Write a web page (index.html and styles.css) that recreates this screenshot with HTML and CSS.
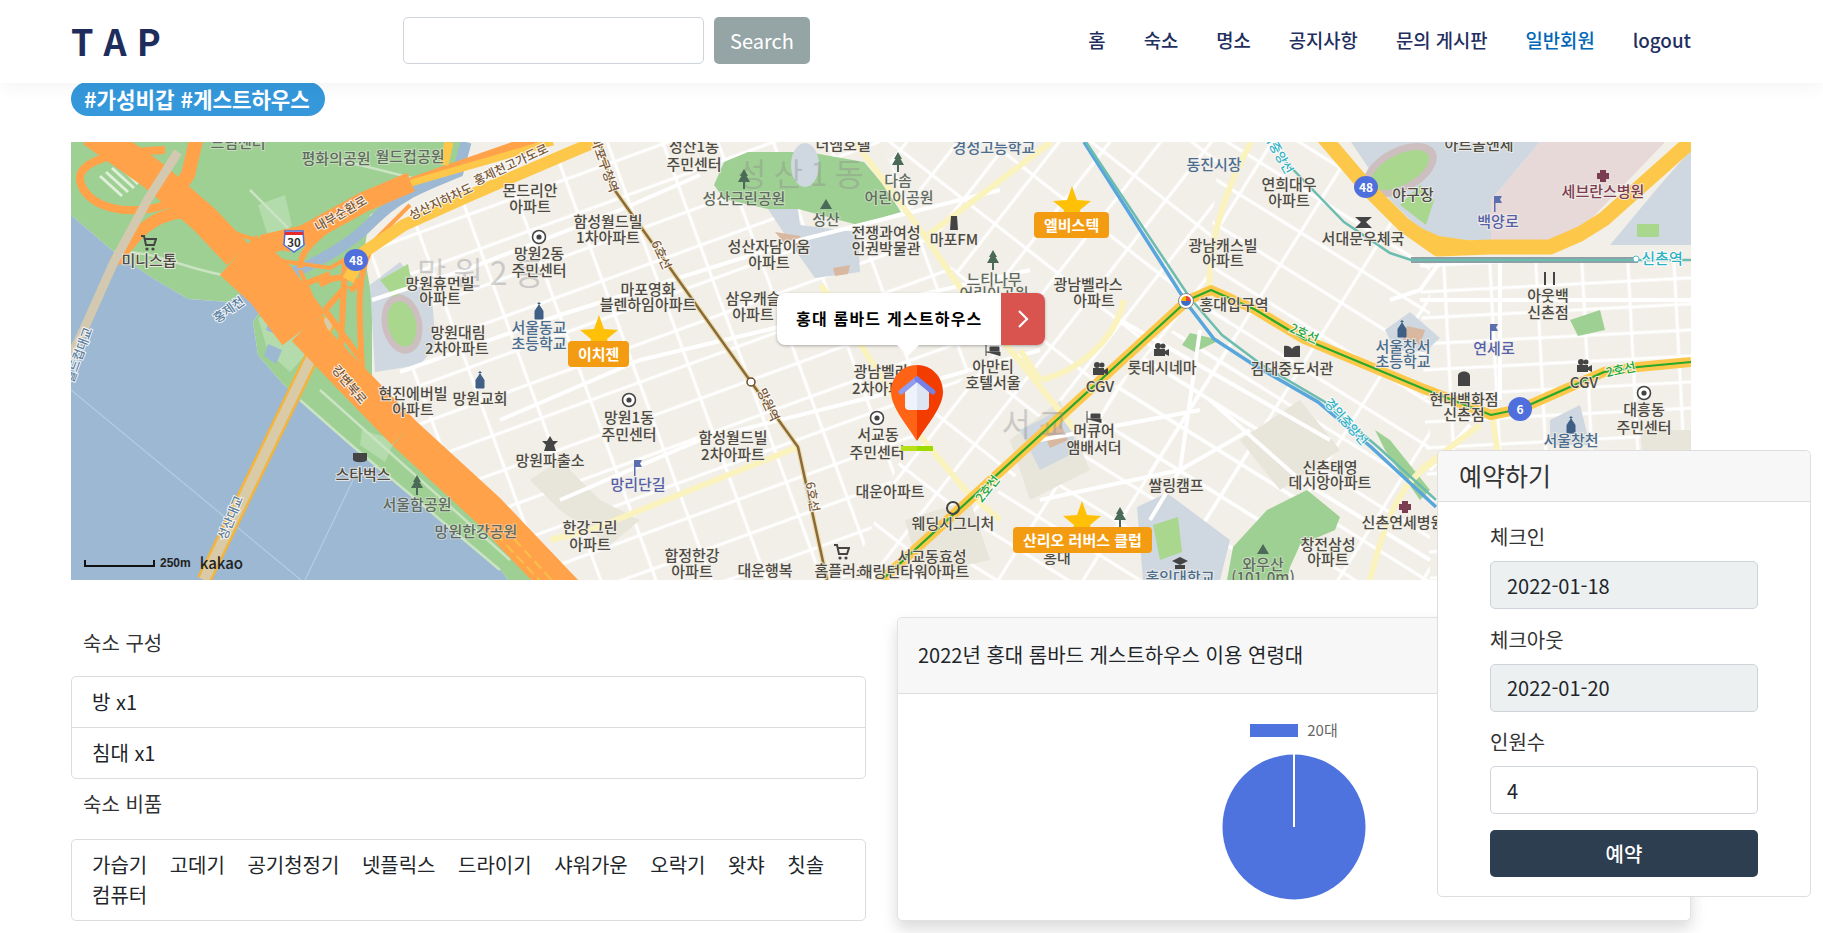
FILE: index.html
```html
<!DOCTYPE html>
<html lang="ko">
<head>
<meta charset="utf-8">
<title>TAP</title>
<link rel="stylesheet" href="styles.css">
</head>
<body>
<header class="topbar">
  <div class="logo">T A P</div>
  <form class="search">
    <input class="search-input" type="text">
    <button class="search-btn" type="button">Search</button>
  </form>
  <nav class="nav">
    <a>홈</a><a>숙소</a><a>명소</a><a>공지사항</a><a>문의 게시판</a><a class="nav-active">일반회원</a><a>logout</a>
  </nav>
</header>

<main class="page">
  <span class="tag">#가성비갑 #게스트하우스</span>

  <section class="map">
    <svg class="map-svg" viewBox="71 142 1620 438" width="1620" height="438" xmlns="http://www.w3.org/2000/svg">
      <defs>
        <pattern id="gw" width="52" height="36" patternUnits="userSpaceOnUse" patternTransform="rotate(-20)">
          <path d="M0 2H52M2 0V36" class="st"/>
        </pattern>
        <pattern id="gc" width="62" height="40" patternUnits="userSpaceOnUse" patternTransform="rotate(-52)">
          <path d="M0 2H62M2 0V40" class="st"/>
        </pattern>
        <pattern id="gd" width="72" height="38" patternUnits="userSpaceOnUse" patternTransform="rotate(32)">
          <path d="M0 2H72M2 0V38" class="st"/>
        </pattern>
        <pattern id="ge" width="46" height="26" patternUnits="userSpaceOnUse" patternTransform="rotate(-3)">
          <path d="M0 2H46M2 0V26" class="st"/>
        </pattern>
        <symbol id="target" viewBox="0 0 16 16" overflow="visible"><circle cx="8" cy="8" r="6.5" fill="#fff" stroke="#444" stroke-width="1.6"/><circle cx="8" cy="8" r="2.6" fill="#444"/></symbol>
        <symbol id="tree" viewBox="0 0 14 20"><path d="M7 0L11 7H9.5L13 13H8V20H6V13H1L4.5 7H3Z" fill="#4b6a58"/></symbol>
        <symbol id="church" viewBox="0 0 14 18"><path d="M7 0V3M5.5 1.5H8.500M7 3L11 9V17H3V9Z" fill="#3f5f85" stroke="#3f5f85"/></symbol>
        <symbol id="flag" viewBox="0 0 10 16"><path d="M1 0H9L7 3.500L9 7H2.500V16H1Z" fill="#5d6eb0"/></symbol>
        <symbol id="cam" viewBox="0 0 16 14"><circle cx="5" cy="3" r="3" fill="#444"/><circle cx="10" cy="3" r="2.500" fill="#444"/><path d="M1 6H12V13H1ZM12 8L16 6V13L12 11Z" fill="#444"/></symbol>
        <symbol id="cart" viewBox="0 0 16 16"><path d="M0 1H3L5 10H13L15 4H4" fill="none" stroke="#444" stroke-width="2"/><circle cx="6" cy="14" r="1.600" fill="#444"/><circle cx="12" cy="14" r="1.600" fill="#444"/></symbol>
        <symbol id="bed" viewBox="0 0 16 12"><path d="M1 0V12M1 8H15V12M5 3H14V7H5Z" fill="#444" stroke="#444"/></symbol>
      </defs>

      <rect x="71" y="142" width="1620" height="438" class="land"/>

      <path class="grid-w" d="M372 300L372 235L471 199L571 154L600 142H880L930 240L1000 330L900 460L850 580H560L400 440L378 400Z"/>
      <path class="grid-c" d="M880 142H1220L1205 300L1100 400L900 580H850L900 460L1000 330L930 240Z"/>
      <path class="grid-d" d="M1220 142H1330L1420 262H1430V580H1220L1100 400L1205 300Z"/>
      <path class="grid-e" d="M1420 262H1691V580H1430Z"/>
      <path class="grid-d" d="M1100 400L1220 300L1330 580H900Z"/>

      <path class="block" d="M1010 440L1060 400L1090 470L1030 500Z"/>
      <path class="block" d="M1240 440L1300 400L1340 450L1280 490Z"/>
      <path class="block" d="M1510 480L1600 450L1640 520L1540 550Z"/>
      <path class="block" d="M905 520L970 500L990 560L920 575Z"/>
      <path class="block" d="M560 460L600 500L640 520L610 545L560 510L530 480Z"/>
      <path class="block" d="M1640 430H1691V530H1650Z"/>

      <path class="park" d="M71 142H464L458 168L420 186L370 215L364 252L372 300L372 385L345 365L290 290L258 282L228 302L188 299L154 279L114 252L71 215Z"/>
      <path class="water" d="M71 215L114 252L154 279L188 299L228 302L258 282L268 299L253 322L258 355L284 385L301 400L348 443L501 570L508 580H71Z"/>
      <path class="channel" d="M262 284C300 272 345 250 372 222S425 186 458 172L466 142"/>
      <path class="park" d="M268 299L253 322L258 355L284 385L348 443L501 570L508 580H556L420 440L330 330L290 290Z"/>
      <path class="park-light" d="M258 318L285 306L310 350L290 372L268 352Z"/>
      <path class="park-light" d="M362 430L395 440L385 462L360 445Z"/>
      <path class="channel-s" d="M270 318L282 322L280 336L266 330ZM268 344L282 350L276 364L264 356Z"/>
      <path class="park-light" d="M258 205L285 195L292 226L268 236Z"/>
      <path class="park-line" d="M114 252C160 250 180 270 240 278M300 400L349 443L500 570M320 390L510 560M250 190L300 240M340 160L420 180"/>
      <path class="hatch" d="M100 176L122 196M106 172L128 192M112 168L134 188M118 164L138 184"/>
      <path class="water-line" d="M71 390L301 580M353 480L305 580"/>

      <path class="campus" d="M370 285L400 262L432 300L436 345L420 365L375 372Z"/>
      <ellipse cx="402" cy="324" rx="20" ry="30" transform="rotate(-12 402 324)" class="track"/>
      <ellipse cx="402" cy="324" rx="14" ry="23" transform="rotate(-12 402 324)" class="field"/>
      <path class="field-2" d="M380 280L408 264L412 286L394 297Z"/>

      <path class="park" d="M714 185L724 162L748 152H808L864 162L881 182L901 212L858 225L798 209H768L724 199Z"/>
      <ellipse cx="805" cy="165" rx="14" ry="22" class="campus"/>
      <path class="campus" d="M768 209L798 209L800 225L858 232L860 272L815 278L795 250Z"/>
      <path class="brick" d="M775 232L800 236L805 247L785 244ZM833 268L850 265L848 274L835 276Z"/>

      <path class="campus" d="M1137 507L1167 493L1230 540L1220 580H1143Z"/>
      <path class="field" d="M1153 525L1178 517L1182 552L1160 560Z"/>
      <path class="park" d="M1227 580L1233 547L1267 510L1307 490L1340 517L1335 530L1300 545L1290 567L1287 580Z"/>
      <path class="park" d="M1375 430L1390 440L1430 490L1420 500L1385 450Z"/>

      <path class="campus" d="M1351 142H1540L1491 200V240H1430L1390 200Z"/>
      <path class="pink" d="M1491 240V200L1540 142H1665L1571 240Z"/>
      <path class="campus" d="M1660 185L1691 150V245H1610Z"/>
      <ellipse cx="1400" cy="170" rx="40" ry="22" transform="rotate(-28 1400 170)" class="track"/>
      <ellipse cx="1400" cy="170" rx="32" ry="15" transform="rotate(-28 1400 170)" class="field"/>
      <path class="field" d="M1400 205L1420 185L1434 200L1426 225Z"/>
      <rect x="1637" y="224" width="22" height="13" class="field"/>
      <path class="campus" d="M1385 330L1410 312L1440 338L1425 352L1395 350Z"/>
      <path class="brick" d="M1407 326L1425 330L1420 345L1403 340Z"/>
      <path class="campus" d="M1550 420L1580 405L1590 445H1550Z"/>
      <path class="campus" d="M1020 430L1060 410L1080 450L1040 470Z"/>
      <path class="brick" d="M1040 425L1060 422L1068 440L1050 448Z"/>
      <path class="park" d="M1190 333L1220 340L1195 352L1182 345Z"/>
      <path class="park" d="M1570 320L1600 310L1605 330L1578 336Z"/>

      <path class="st-main" d="M372 300L470 268L620 210L700 175M400 372L560 315L800 240L1000 190M500 420L640 360L830 315L1030 270M560 500L700 440L900 390L1040 350M1040 440L1200 410M1210 400L1300 480L1430 560M1120 320L1330 440M1040 500L1180 470L1250 430M1200 330L1180 470L1150 520M1420 300H1691M1430 470L1470 425M1500 262V400M1440 262L1420 290L1390 300"/>
      <path class="st-pale" d="M855 142L924 235L961 289L1075 430"/>
      <path class="st-pale" d="M928 235L1051 142"/>
      <path class="st-pale" d="M821 285L861 345L911 425L965 490L1000 520"/>
      <path class="st-pale" d="M1251 142C1225 190 1209 240 1209 290"/>
      <path class="st-pale" d="M1124 300C1115 340 1080 370 1041 380M1020 350L1040 380"/>
      <path class="st-pale" d="M550 540L591 530L798 447"/>
      <path class="st-pale" d="M1437 460C1400 480 1385 520 1370 580"/>
      <path class="st-pale" d="M1480 425L1420 470M1493 420L1500 470"/>

      <path class="bridge-edge" d="M330 319L204 580"/>
      <path class="bridge" d="M330 319L204 580"/>

      <path class="hw" stroke-width="34" d="M404 433L488 510L566 592"/>
      <path class="hw" stroke-width="34" d="M304 329L345 372L404 433"/>
      <path class="hw" stroke-width="30" d="M92 132L153 175L204 219L238 255"/>
      <path class="hw" stroke-width="54" d="M238 255L271 285L304 329"/>
      <path class="hw" stroke-width="14" d="M197 136L188 175L171 198"/>
      <path class="hw" stroke-width="8" d="M165 150C110 152 78 162 80 180C84 205 125 222 180 200"/>
      <path class="hw" stroke-width="12" d="M185 212C150 215 135 235 115 262"/>
      <path class="hw" stroke-width="20" d="M262 245L304 235L364 202L411 182"/>
      <path class="hw" stroke-width="9" d="M411 182L560 130"/>
      <path class="hw" stroke-width="4" d="M190 212L240 235L290 250M330 340L300 270M275 260L330 268L370 245L410 205"/>
      <path class="hw" stroke-width="6" d="M300 268C300 240 340 230 345 205M320 285C340 270 370 280 350 290M290 290L330 274M325 310L347 285M325 310L360 358M345 262L340 365M370 250C355 280 360 320 362 370"/>
      <path class="hw-dash" d="M504 528L570 600M496 534L558 600"/>

      <path class="yl" stroke-width="12" d="M348 280L364 252L404 225L471 195L571 152L600 140"/>
      <path class="yl" stroke-width="9" d="M449 142L444 165"/>
      <path class="yl" stroke-width="7" d="M411 183L553 142"/>
      <path class="yl" stroke-width="15" d="M1321 134L1368 189L1404 225L1438 249L1490 247H1550L1580 234L1604 219L1697 136"/>
      <path class="yl" stroke-width="8" d="M1404 225L1438 240L1480 246"/>
      <path class="bridge-thin" d="M178 152L148 199L114 262L84 329L68 362"/>

      <path class="rail-6o" d="M600 142L611 185L751 382L798 447L827 580"/>
      <path class="rail-6" d="M600 142L611 185L751 382L798 447L827 580"/>

      <path class="rail-blue" d="M1084 142L1188 305L1214 339L1254 365L1318 402L1371 447L1436 507"/>
      <path class="rail-teal" d="M1086 142L1190 298L1222 335L1262 365L1325 402L1378 447L1436 500"/>
      <path class="rail-grey" d="M1411 260H1638"/>
      <path class="rail-teal" d="M1281 157L1344 222L1390 253L1411 260H1691"/>

      <path class="l2" d="M860 600L1188 300L1211 290L1254 309L1304 339L1424 389L1491 415L1520 409L1604 372L1638 367L1691 362"/>
      <path class="l2g" d="M860 600L1188 300L1211 290L1254 309L1304 339L1424 389L1491 415L1520 409L1604 372L1638 367L1691 362"/>

      <!-- watermark district names -->
      <text x="484" y="285" class="w">망원2동</text>
      <text x="804" y="186" class="w">성산1동</text>
      <text x="1038" y="436" class="w">서교</text>

      <!-- icons -->
      <use href="#target" x="531" y="229" width="16" height="16"/>
      <use href="#target" x="621" y="392" width="16" height="16"/>
      <use href="#target" x="869" y="410" width="16" height="16"/>
      <use href="#target" x="1636" y="385" width="16" height="16"/>
      <use href="#tree" x="737" y="169" width="14" height="20"/>
      <use href="#tree" x="891" y="152" width="14" height="20"/>
      <use href="#tree" x="986" y="250" width="14" height="20"/>
      <use href="#tree" x="410" y="475" width="14" height="20"/>
      <use href="#tree" x="1113" y="507" width="14" height="20"/>
      <path d="M820 209L826 199L832 209ZM1257 554L1263 544L1269 554Z" class="icon-g"/>
      <use href="#church" x="532" y="302" width="14" height="18"/>
      <use href="#church" x="473" y="371" width="14" height="18"/>
      <use href="#church" x="1395" y="320" width="14" height="18"/>
      <use href="#church" x="1564" y="416" width="14" height="18"/>
      <use href="#flag" x="633" y="460" width="10" height="16"/>
      <use href="#flag" x="1493" y="196" width="10" height="16"/>
      <use href="#flag" x="1489" y="324" width="10" height="16"/>
      <use href="#cam" x="1092" y="362" width="16" height="14"/>
      <use href="#cam" x="1153" y="343" width="16" height="14"/>
      <use href="#cam" x="1576" y="359" width="16" height="14"/>
      <use href="#cart" x="141" y="235" width="16" height="16"/>
      <use href="#cart" x="834" y="544" width="16" height="16"/>
      <use href="#bed" x="1086" y="411" width="16" height="12"/>
      <use href="#bed" x="985" y="344" width="16" height="12"/>
      <path class="icon-d" d="M550 436L553 441H558L554 445L556 451H544L546 445L542 441H547ZM1355 217H1372L1366 222L1372 228H1355L1361 222ZM1284 346C1288 345 1291 347 1292 349C1293 347 1296 345 1300 346V357H1284ZM1458 386V376C1458 370 1470 370 1470 376V386ZM353 453H367V460C365 463 355 463 353 460ZM1544 272V285H1546V272ZM1553 272V285H1555V272Z"/>
      <path class="icon-m" d="M1600 170H1606V173H1609V179H1606V182H1600V179H1597V173H1600ZM1402 501H1408V504H1411V510H1408V513H1402V510H1399V504H1402Z"/>
      <circle cx="953" cy="508" r="6" class="icon-r"/>
      <path class="icon-d" d="M1172 561L1180 557L1188 561L1180 565ZM1175 565H1185V569H1175ZM951 216H957L958 230H950Z"/>

      <!-- labels -->
      <text x="238" y="148" class="l g">드림센터</text>
      <text x="336" y="164" class="l g">평화의공원</text>
      <text x="410" y="162" class="l g">월드컵공원</text>
      <text x="149" y="266" class="l">미니스톱</text>
      <text x="530" y="196" class="l">몬드리안</text>
      <text x="530" y="212" class="l">아파트</text>
      <text x="608" y="227" class="l">함성월드빌</text>
      <text x="608" y="243" class="l">1차아파트</text>
      <text x="539" y="259" class="l">망원2동</text>
      <text x="539" y="276" class="l">주민센터</text>
      <text x="440" y="289" class="l">망원휴먼빌</text>
      <text x="440" y="304" class="l">아파트</text>
      <text x="458" y="338" class="l">망원대림</text>
      <text x="457" y="354" class="l">2차아파트</text>
      <text x="539" y="333" class="l b">서울동교</text>
      <text x="539" y="349" class="l b">초등학교</text>
      <text x="413" y="399" class="l">현진에버빌</text>
      <text x="413" y="415" class="l">아파트</text>
      <text x="480" y="404" class="l">망원교회</text>
      <text x="694" y="152" class="l">성산1동</text>
      <text x="694" y="170" class="l">주민센터</text>
      <text x="744" y="204" class="l g">성산근린공원</text>
      <text x="826" y="225" class="l g">성산</text>
      <text x="898" y="186" class="l g">다솜</text>
      <text x="899" y="203" class="l g">어린이공원</text>
      <text x="843" y="150" class="l">더엠호텔</text>
      <text x="994" y="153" class="l b">경성고등학교</text>
      <text x="648" y="295" class="l">마포영화</text>
      <text x="648" y="310" class="l">블렌하임아파트</text>
      <text x="769" y="252" class="l">성산자담이움</text>
      <text x="769" y="268" class="l">아파트</text>
      <text x="886" y="238" class="l">전쟁과여성</text>
      <text x="886" y="254" class="l">인권박물관</text>
      <text x="954" y="245" class="l">마포FM</text>
      <text x="753" y="304" class="l">삼우캐슬</text>
      <text x="753" y="320" class="l">아파트</text>
      <text x="994" y="285" class="l g">느티나무</text>
      <text x="994" y="299" class="l g">어린이공원</text>
      <text x="1088" y="290" class="l">광남벨라스</text>
      <text x="1094" y="306" class="l">아파트</text>
      <text x="881" y="377" class="l">광남벨라</text>
      <text x="884" y="394" class="l">2차아파트</text>
      <text x="993" y="372" class="l">아만티</text>
      <text x="993" y="388" class="l">호텔서울</text>
      <text x="629" y="423" class="l">망원1동</text>
      <text x="629" y="440" class="l">주민센터</text>
      <text x="878" y="440" class="l">서교동</text>
      <text x="877" y="458" class="l">주민센터</text>
      <text x="733" y="443" class="l">함성월드빌</text>
      <text x="733" y="460" class="l">2차아파트</text>
      <text x="550" y="466" class="l">망원파출소</text>
      <text x="638" y="490" class="l b2">망리단길</text>
      <text x="363" y="480" class="l">스타벅스</text>
      <text x="417" y="510" class="l g">서울함공원</text>
      <text x="476" y="537" class="l g">망원한강공원</text>
      <text x="590" y="533" class="l">한강그린</text>
      <text x="590" y="550" class="l">아파트</text>
      <text x="692" y="561" class="l">합정한강</text>
      <text x="692" y="577" class="l">아파트</text>
      <text x="765" y="576" class="l">대운행복</text>
      <text x="842" y="576" class="l">홈플러스</text>
      <text x="890" y="497" class="l">대운아파트</text>
      <text x="953" y="529" class="l">웨딩시그니처</text>
      <text x="932" y="562" class="l">서교동효성</text>
      <text x="914" y="577" class="l">해링턴타워아파트</text>
      <text x="1094" y="436" class="l">머큐어</text>
      <text x="1094" y="453" class="l">앰배서더</text>
      <text x="1162" y="373" class="l">롯데시네마</text>
      <text x="1100" y="392" class="l">CGV</text>
      <text x="1292" y="374" class="l">김대중도서관</text>
      <text x="1403" y="352" class="l b">서울창서</text>
      <text x="1403" y="367" class="l b">초등학교</text>
      <text x="1494" y="354" class="l b2">연세로</text>
      <text x="1464" y="405" class="l">현대백화점</text>
      <text x="1464" y="420" class="l">신촌점</text>
      <text x="1584" y="388" class="l">CGV</text>
      <text x="1644" y="415" class="l">대흥동</text>
      <text x="1644" y="433" class="l">주민센터</text>
      <text x="1548" y="301" class="l">아웃백</text>
      <text x="1548" y="318" class="l">신촌점</text>
      <text x="1571" y="446" class="l b">서울창천</text>
      <text x="1176" y="491" class="l">쌀링캠프</text>
      <text x="1330" y="473" class="l">신촌태영</text>
      <text x="1330" y="488" class="l">데시앙아파트</text>
      <text x="1328" y="550" class="l">창전삼성</text>
      <text x="1328" y="565" class="l">아파트</text>
      <text x="1263" y="570" class="l g">와우산</text>
      <text x="1263" y="583" class="l g">(101.0m)</text>
      <text x="1403" y="528" class="l">신촌연세병원</text>
      <text x="1057" y="563" class="l">홍대</text>
      <text x="1180" y="583" class="l b">홍익대학교</text>
      <text x="1214" y="170" class="l b">동진시장</text>
      <text x="1289" y="190" class="l">연희대우</text>
      <text x="1289" y="206" class="l">아파트</text>
      <text x="1223" y="251" class="l">광남캐스빌</text>
      <text x="1223" y="266" class="l">아파트</text>
      <text x="1234" y="310" class="l">홍대입구역</text>
      <text x="1363" y="244" class="l">서대문우체국</text>
      <text x="1413" y="200" class="l">야구장</text>
      <text x="1498" y="227" class="l b2">백양로</text>
      <text x="1603" y="197" class="l mr">세브란스병원</text>
      <text x="1479" y="150" class="l">아트올앤세</text>
      <text x="1662" y="264" class="l t">신촌역</text>

      <text x="1304" y="338" transform="rotate(25 1304 334)" class="s gr">2호선</text>
      <text x="1621" y="374" transform="rotate(-12 1621 370)" class="s gr">2호선</text>
      <text x="988" y="493" transform="rotate(-52 988 489)" class="s gr">2호선</text>
      <text x="1346" y="426" transform="rotate(48 1346 422)" class="s t">경의중앙선</text>
      <text x="1275" y="152" transform="rotate(60 1275 148)" class="s t">경의중앙선</text>
      <text x="661" y="259" transform="rotate(65 661 255)" class="s br">6호선</text>
      <text x="812" y="501" transform="rotate(80 812 497)" class="s br">6호선</text>
      <text x="604" y="169" transform="rotate(70 604 165)" class="s br">마포구청역</text>
      <text x="768" y="409" transform="rotate(65 768 405)" class="s br">망원역</text>
      <text x="341" y="218" transform="rotate(-30 341 214)" class="s br">내부순환로</text>
      <text x="349" y="389" transform="rotate(50 349 385)" class="s br">강변북로</text>
      <text x="441" y="206" transform="rotate(-25 441 202)" class="s br">성산지하차도</text>
      <text x="511" y="169" transform="rotate(-25 511 165)" class="s br">홍제천고가도로</text>
      <text x="229" y="314" transform="rotate(-35 229 310)" class="s bl">홍제천</text>
      <text x="231" y="522" transform="rotate(-68 231 518)" class="s bl">성산대교</text>
      <text x="79" y="359" transform="rotate(-70 79 355)" class="s bl">월드컵대교</text>

      <!-- stations / badges -->
      <circle cx="751" cy="382" r="4" class="stn-6"/>
      <circle cx="1186" cy="301" r="7.500" class="stn"/>
      <path d="M1186 296A5 5 0 0 1 1191 301H1186Z" class="c-r"/>
      <path d="M1186 301H1191A5 5 0 0 1 1181 301Z" class="c-b"/>
      <path d="M1186 296A5 5 0 0 0 1181 301H1186Z" class="c-y"/>
      <circle cx="1636" cy="259" r="3" class="stn-t"/>

      <ellipse cx="356" cy="260" rx="12" ry="11" class="badge"/>
      <text x="356" y="265" class="badge-t">48</text>
      <ellipse cx="1366" cy="187" rx="12" ry="11" class="badge"/>
      <text x="1366" y="192" class="badge-t">48</text>
      <ellipse cx="1520" cy="409" rx="12" ry="12" class="badge"/>
      <text x="1520" y="414" class="badge-t">6</text>
      <path d="M285 231H303L304 245L294 252L284 245Z" class="shield"/>
      <rect x="285" y="232" width="18" height="3" class="shield-r"/>
      <text x="294" y="247" class="shield-t">30</text>
    </svg>

    <div class="marker marker-a">
      <svg class="star" viewBox="0 0 38 38"><polygon points="19,0 24,14 38,15 27,24 31,38 19,30 7,38 11,24 0,15 14,14"/></svg>
      <span class="marker-label">이치젠</span>
    </div>
    <div class="marker marker-b">
      <svg class="star" viewBox="0 0 38 38"><polygon points="19,0 24,14 38,15 27,24 31,38 19,30 7,38 11,24 0,15 14,14"/></svg>
      <span class="marker-label">엘비스텍</span>
    </div>
    <div class="marker marker-c">
      <svg class="star" viewBox="0 0 38 38"><polygon points="19,0 24,14 38,15 27,24 31,38 19,30 7,38 11,24 0,15 14,14"/></svg>
      <span class="marker-label">산리오 러버스 클럽</span>
    </div>

    <div class="callout">
      <span class="callout-text">홍대 롬바드 게스트하우스</span>
      <span class="callout-go">
        <svg viewBox="0 0 12 20" width="12" height="20"><path d="M2 2L10 10L2 18" fill="none" stroke="#fff" stroke-width="2.200"/></svg>
      </span>
    </div>

    <svg class="pin" viewBox="0 0 52 88">
      <path d="M26 0C11 0 0 12 0 27C0 42 16 60 26 76Z" fill="#ff6316"/>
      <path d="M26 0C41 0 52 12 52 27C52 42 36 60 26 76Z" fill="#f23c00"/>
      <path d="M14 27V41Q14 45 18 45H26V16Z" fill="#eef3fb"/>
      <path d="M38 27V41Q38 45 34 45H26V16Z" fill="#dde4f2"/>
      <path d="M26 14L10 27" stroke="#8f9cf0" stroke-width="5" stroke-linecap="round"/>
      <path d="M26 14L42 27" stroke="#7481e6" stroke-width="5" stroke-linecap="round"/>
      <rect x="10" y="81" width="16" height="5" fill="#b8e01a"/>
      <rect x="26" y="81" width="16" height="5" fill="#9ddb00"/>
    </svg>

    <div class="scale">
      <span class="scale-bar"></span>
      <span class="scale-num">250m</span>
      <span class="scale-logo">kakao</span>
    </div>
  </section>

  <section class="details">
    <div class="info">
      <h2 class="info-title first">숙소 구성</h2>
      <ul class="list">
        <li class="list-row">방 x1</li>
        <li class="list-row">침대 x1</li>
      </ul>
      <h2 class="info-title second">숙소 비품</h2>
      <ul class="list">
        <li class="list-row amenities">
          <span>가습기</span><span>고데기</span><span>공기청정기</span><span>넷플릭스</span><span>드라이기</span><span>샤워가운</span><span>오락기</span><span>왓챠</span><span>칫솔</span><span>컴퓨터</span>
        </li>
      </ul>
    </div>

    <div class="chart-card">
      <div class="chart-head">2022년 홍대 롬바드 게스트하우스 이용 연령대</div>
      <div class="chart-body">
        <div class="legend"><span class="legend-swatch"></span><span>20대</span></div>
        <svg class="pie" viewBox="0 0 144 146" width="144" height="146">
          <ellipse cx="72" cy="73" rx="71.500" ry="72.500" fill="#4e73df"/>
          <line x1="72" y1="0" x2="72" y2="73" stroke="#fff" stroke-width="2"/>
        </svg>
      </div>
    </div>
  </section>
</main>

<aside class="booking">
  <div class="booking-head">예약하기</div>
  <form class="booking-body">
    <label class="field-label">체크인</label>
    <input class="field-input is-locked" type="text" value="2022-01-18" readonly>
    <label class="field-label">체크아웃</label>
    <input class="field-input is-locked" type="text" value="2022-01-20" readonly>
    <label class="field-label">인원수</label>
    <input class="field-input" type="text" value="4">
    <button class="book-btn" type="button">예약</button>
  </form>
</aside>
</body>
</html>
```

FILE: styles.css
```css
* { box-sizing: border-box; }
html, body { margin: 0; padding: 0; height: 933px; overflow: hidden; }
body {
  position: relative;
  background: #fff;
  color: #212529;
  font-family: "Noto Sans CJK KR", "Noto Sans", sans-serif;
  font-size: 20px;
  line-height: 1.5;
}

/* header */
.topbar {
  position: relative;
  z-index: 5;
  display: flex;
  align-items: center;
  height: 83px;
  padding: 0 132px 0 71px;
  background: #fff;
  box-shadow: 0 6px 16px rgba(0, 0, 0, 0.04);
}
.logo {
  width: 332px;
  margin-bottom: 4px;
  color: #1f2d5c;
  font-size: 36px;
  font-weight: 700;
  letter-spacing: 0;
  line-height: 1;
}
.search { display: flex; gap: 10px; height: 47px; margin-bottom: 2px; }
.search-input {
  width: 301px;
  border: 1px solid #ced4da;
  border-radius: 5px;
  background: #fff;
}
.search-btn {
  width: 96px;
  border: 0;
  border-radius: 5px;
  background: #95a5a6;
  color: #fff;
  font: 400 20px "Noto Sans CJK KR", sans-serif;
}
.nav {
  display: flex;
  gap: 38px;
  margin-left: auto;
  margin-bottom: 2px;
  color: #1f2f5f;
  font-size: 18.8px;
  font-weight: 500;
}
.nav-active { color: #0067b8; }

/* page */
.page { padding: 0 132px 0 71px; }
.tag {
  display: block;
  width: 254px;
  height: 34px;
  margin-top: -1px;
  padding: 0 13px;
  border-radius: 17px;
  background: #3498db;
  color: #fff;
  font-size: 21.2px;
  font-weight: 700;
  line-height: 33px;
  white-space: nowrap;
}

/* map */
.map {
  position: relative;
  width: 1620px;
  height: 438px;
  margin-top: 26px;
  overflow: hidden;
}
.map-svg { display: block; font-family: "Noto Sans CJK KR", sans-serif; }
.st { fill: none; stroke: #fff; stroke-width: 3; }
.land { fill: #f2efe9; }
.grid-w { fill: url(#gw); }
.grid-c { fill: url(#gc); }
.grid-d { fill: url(#gd); }
.grid-e { fill: url(#ge); }
.block { fill: #e8e5da; }
.park { fill: #9fd093; }
.park-light { fill: #b4dbab; }
.park-line { fill: none; stroke: #c9e3c3; stroke-width: 2.500; }
.hatch { fill: none; stroke: #dff0da; stroke-width: 3; }
.water { fill: #9db8d2; }
.water-line { fill: none; stroke: #b5cde2; stroke-width: 1.200; }
.channel { fill: none; stroke: #9db8d2; stroke-width: 11; }
.channel-s { fill: #9db8d2; }
.campus { fill: #cfd8e0; }
.pink { fill: #e6d9d8; }
.track { fill: #cdbfc0; }
.field { fill: #a9d78e; }
.field-2 { fill: #a9d78e; }
.brick { fill: #d9b8a2; }
.st-main { fill: none; stroke: #fff; stroke-width: 4; }
.st-pale { fill: none; stroke: #fbf3bd; stroke-width: 6; }
.bridge-edge { fill: none; stroke: #f3b43e; stroke-width: 15; }
.bridge { fill: none; stroke: #d9cba8; stroke-width: 10; }
.bridge-thin { fill: none; stroke: #d3c9b0; stroke-width: 9; }
.hw { fill: none; stroke: #ffa24a; stroke-linejoin: round; }
.hw-dash { fill: none; stroke: #f6c04b; stroke-width: 2; stroke-dasharray: 10 5; }
.yl { fill: none; stroke: #fdc84a; stroke-linejoin: round; }
.rail-6o { fill: none; stroke: #ecdfae; stroke-width: 5; }
.rail-6 { fill: none; stroke: #8a6a3a; stroke-width: 2.500; }
.rail-blue { fill: none; stroke: #58a6dc; stroke-width: 3.500; }
.rail-teal { fill: none; stroke: #6dbcb0; stroke-width: 2.500; }
.rail-grey { fill: none; stroke: #8f9ea6; stroke-width: 6; }
.l2 { fill: none; stroke: #fdc84a; stroke-width: 10; stroke-linejoin: round; }
.l2g { fill: none; stroke: #2aa82a; stroke-width: 2.200; stroke-linejoin: round; }

.w { fill: rgba(140, 140, 140, 0.38); font-size: 32px; letter-spacing: 7px; text-anchor: middle; }
.l {
  fill: #4d4b43;
  font-size: 15px;
  font-weight: 500;
  text-anchor: middle;
  paint-order: stroke;
  stroke: rgba(242, 239, 233, 0.85);
  stroke-width: 2px;
}
.g { fill: #5f6b5f; stroke: rgba(242, 239, 233, 0.45); }
.b { fill: #4a6d8f; }
.b2 { fill: #5560a8; }
.mr { fill: #7c3c52; }
.t { fill: #2fb1c4; stroke: #fff; }
.s {
  font-size: 12.500px;
  font-weight: 500;
  text-anchor: middle;
  paint-order: stroke;
  stroke: rgba(255, 255, 255, 0.85);
  stroke-width: 2px;
}
.gr { fill: #1fa53a; }
.br { fill: #7a5a3a; }
.bl { fill: #5d7f9f; }
.icon-g { fill: #4b6a58; }
.icon-d { fill: #444; }
.icon-m { fill: #7c3c52; }
.icon-r { fill: none; stroke: #444; stroke-width: 2; }
.stn-6 { fill: #fff; stroke: #6b4a2a; stroke-width: 1.500; }
.stn { fill: #fff; stroke: #888; stroke-width: 1; }
.c-r { fill: #e8443a; }
.c-b { fill: #3b6cc8; }
.c-y { fill: #f4b400; }
.stn-t { fill: #fff; stroke: #5db8c8; }
.badge { fill: #4f6fdc; }
.badge-t { fill: #fff; font-size: 12px; font-weight: 700; text-anchor: middle; }
.shield { fill: #fff; stroke: #4f6fdc; stroke-width: 1.500; }
.shield-r { fill: #e62a2a; }
.shield-t { fill: #333; font-size: 11.500px; font-weight: 700; text-anchor: middle; }

/* map overlays */
.marker {
  position: absolute;
  display: flex;
  flex-direction: column;
  align-items: center;
}
.marker-a { left: 497px; top: 173px; }
.marker-b { left: 963px; top: 44px; }
.marker-c { left: 942px; top: 359px; }
.star { width: 38px; height: 38px; margin-bottom: -12px; fill: #ffc107; }
.marker-label {
  position: relative;
  padding: 0 10px;
  height: 26px;
  border-radius: 4px;
  background: #f39c12;
  color: #fff;
  font-size: 15px;
  font-weight: 700;
  line-height: 25px;
  white-space: nowrap;
}
.callout {
  position: absolute;
  left: 706px;
  top: 151px;
  display: flex;
  width: 268px;
  height: 52px;
  border-radius: 8px;
  background: #fff;
  box-shadow: 0 1px 3px rgba(0, 0, 0, 0.3);
}
.callout::after {
  content: "";
  position: absolute;
  left: 119px;
  top: 51px;
  border: 12px solid transparent;
  border-top-color: #fff;
  border-bottom-width: 0;
}
.callout-text {
  flex: 1;
  padding-left: 19px;
  color: #000;
  font-size: 16px;
  font-weight: 700;
  letter-spacing: 1.2px;
  line-height: 50px;
  white-space: nowrap;
}
.callout-go {
  display: flex;
  align-items: center;
  justify-content: center;
  width: 44px;
  border-radius: 0 8px 8px 0;
  background: #d9534f;
}
.pin { position: absolute; left: 820px; top: 223px; width: 52px; height: 88px; }
.scale {
  position: absolute;
  left: 13px;
  top: 410px;
  display: flex;
  align-items: center;
  height: 22px;
  color: #222;
}
.scale-bar {
  width: 71px;
  height: 7px;
  border: 2px solid #111;
  border-top: 0;
}
.scale-num { margin-left: 5px; font-size: 12px; font-weight: 700; font-family: "Liberation Sans", sans-serif; }
.scale-logo { margin-left: 9px; font-size: 15px; font-weight: 500; }

/* details */
.details { display: flex; gap: 31px; align-items: flex-start; margin-top: 37px; }
.info { width: 795px; }
.info-title { margin: 0; padding-left: 12px; font-size: 20px; font-weight: 400; color: #333; }
.info-title.first { padding-top: 11px; margin-bottom: 18px; }
.info-title.second { margin-top: 10px; margin-bottom: 20px; }
.list { margin: 0; padding: 0; list-style: none; border: 1px solid #dcdcdc; border-radius: 5px; }
.list-row { padding: 10px 20px; line-height: 30px; }
.list-row + .list-row { border-top: 1px solid #dcdcdc; }
.amenities { display: flex; flex-wrap: wrap; column-gap: 22.500px; }
.chart-card {
  width: 794px;
  height: 304px;
  border: 1px solid #e2e2e2;
  border-radius: 5px;
  background: #fff;
  box-shadow: 0 8px 16px rgba(0, 0, 0, 0.15);
}
.chart-head {
  height: 76px;
  padding-left: 20px;
  border-bottom: 1px solid #dedede;
  background: #f7f7f7;
  border-radius: 5px 5px 0 0;
  font-size: 20px;
  line-height: 74px;
}
.chart-body { display: flex; flex-direction: column; align-items: center; }
.legend {
  display: flex;
  align-items: center;
  gap: 9px;
  height: 20px;
  margin-top: 26px;
  color: #666;
  font-size: 15px;
}
.legend-swatch { width: 48px; height: 13px; background: #4e73df; }
.pie { margin-top: 14px; }

/* booking */
.booking {
  position: absolute;
  z-index: 4;
  left: 1437px;
  top: 450px;
  width: 374px;
  height: 447px;
  border: 1px solid #dedede;
  border-radius: 5px;
  background: #fff;
}
.booking-head {
  height: 51px;
  padding-left: 21px;
  border-bottom: 1px solid #dedede;
  background: #f7f7f7;
  border-radius: 5px 5px 0 0;
  font-size: 25px;
  line-height: 48px;
  color: #333;
}
.booking-body { display: flex; flex-direction: column; padding: 20px 52px 0; }
.field-label { height: 29px; margin-bottom: 10px; line-height: 29px; color: #333; }
.field-input {
  flex: none;
  height: 48px;
  margin-bottom: 15.500px;
  padding: 0 16px;
  border: 1px solid #ced4da;
  border-radius: 5px;
  background: #fff;
  color: #212529;
  font: 400 20px "Noto Sans CJK KR", sans-serif;
}
.field-input.is-locked { background: #ecf0f1; }
.book-btn {
  height: 47px;
  border: 0;
  border-radius: 5px;
  background: #2c3e50;
  color: #fff;
  font: 500 20px "Noto Sans CJK KR", sans-serif;
}
```
